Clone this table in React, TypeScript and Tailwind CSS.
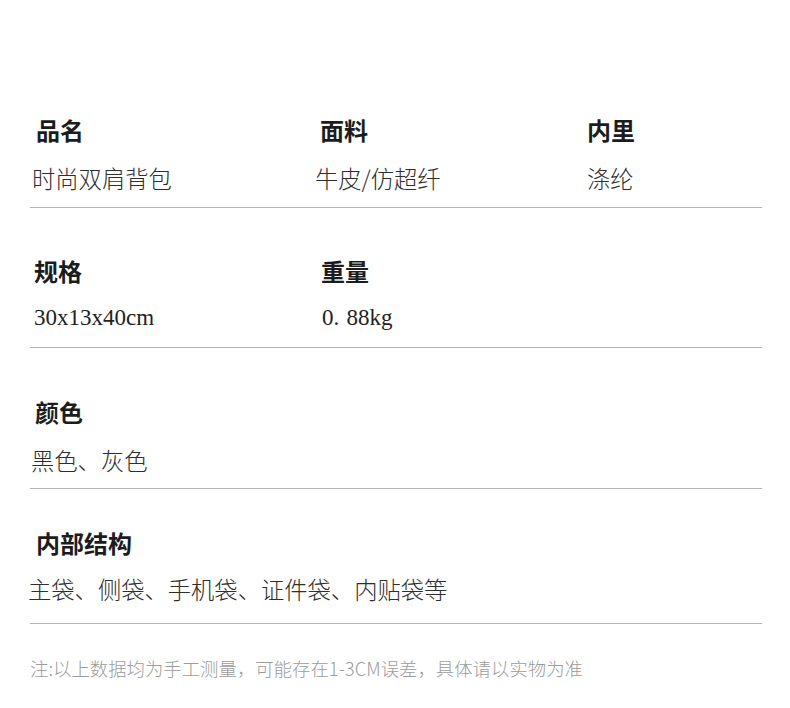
import React from "react";

const cjk = "font-['Noto_Sans_CJK_SC','Noto_Sans',sans-serif]";
const H = `${cjk} text-[24px] leading-[30px] h-[30px] font-bold text-[#1c1c1c] whitespace-nowrap`;
const V = `${cjk} text-[23.3px] leading-[30px] h-[30px] font-light text-[#2e2e2e] whitespace-nowrap`;
const S = "font-['Liberation_Serif',serif] text-[23px] leading-[30px] h-[30px] text-[#222] whitespace-nowrap";

export default function App() {
  return (
    <div className="w-[790px] h-[708px] bg-white overflow-hidden">
      <div className="ml-[30px] mr-[28px]">
        {/* Row 1 */}
        <div className="flex pt-[115px] pb-[14px] border-b border-[#b5b5b5]">
          <div className="w-[285px] flex flex-col gap-[18px]">
            <div className={`${H} pl-[6px]`}>品名</div>
            <div className={`${V} pl-[2px]`}>时尚双肩背包</div>
          </div>
          <div className="w-[272px] flex flex-col gap-[18px]">
            <div className={`${H} pl-[5px]`}>面料</div>
            <div className={`${V}`}>牛皮/仿超纤</div>
          </div>
          <div className="flex-1 flex flex-col gap-[18px]">
            <div className={`${H}`}>内里</div>
            <div className={`${V}`}>涤纶</div>
          </div>
        </div>

        {/* Row 2 */}
        <div className="flex pt-[48px] pb-[14px] border-b border-[#b5b5b5]">
          <div className="w-[285px] flex flex-col gap-[17px]">
            <div className={`${H} pl-[4px]`}>规格</div>
            <div className={`${S} pl-[4px]`}>30x13x40cm</div>
          </div>
          <div className="w-[272px] flex flex-col gap-[17px]">
            <div className={`${H} pl-[6px]`}>重量</div>
            <div className={`${S} pl-[7px]`}>
              0<span className="inline-block w-[13px]">.</span>88kg
            </div>
          </div>
          <div className="flex-1" />
        </div>

        {/* Row 3 */}
        <div className="flex flex-col gap-[18px] pt-[49px] pb-[13px] border-b border-[#b5b5b5]">
          <div className={`${H} pl-[5px]`}>颜色</div>
          <div className={`${V} pl-[1px]`}>黑色、灰色</div>
        </div>

        {/* Row 4 */}
        <div className="flex flex-col gap-[16px] pt-[39px] pb-[19px] border-b border-[#b5b5b5]">
          <div className={`${H} pl-[6px]`}>内部结构</div>
          <div className={`${V} -ml-[2px]`}>主袋、侧袋、手机袋、证件袋、内贴袋等</div>
        </div>

        {/* Note */}
        <div className={`${cjk} pt-[32px] text-[18.4px] leading-[24px] text-[#9c9c9c] font-light whitespace-nowrap`}>
          注:以上数据均为手工测量，可能存在1-3CM误差，具体请以实物为准
        </div>
      </div>
    </div>
  );
}
